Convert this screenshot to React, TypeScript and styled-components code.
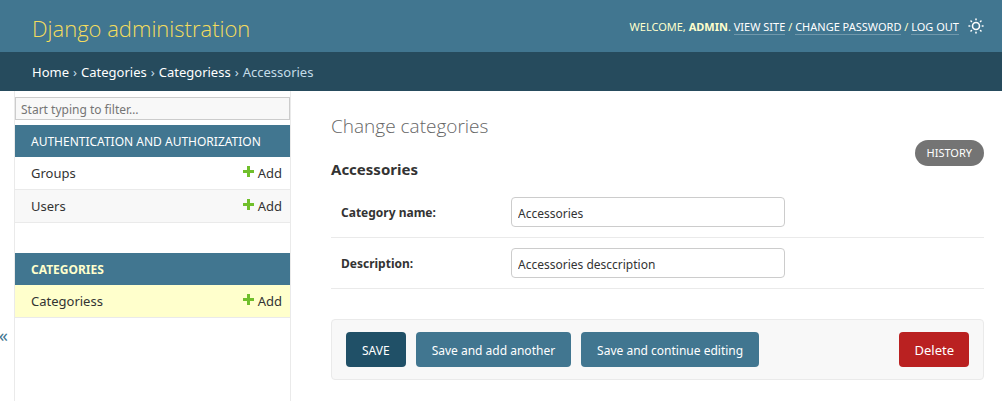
import React from "react";
import styled, { createGlobalStyle } from "styled-components";

const GlobalStyle = createGlobalStyle`
  *, *::before, *::after { box-sizing: border-box; }
  html, body, #root { margin: 0; height: 100%; }
  body {
    background: #fff;
    color: #333;
    font-family: "Segoe UI", "Noto Sans", "Open Sans", sans-serif;
    font-size: 13px;
    line-height: 20px;
  }
  h1, h2, p { margin: 0; }
  a { color: inherit; text-decoration: none; }
  input, button { font-family: inherit; margin: 0; }
`;

const Page = styled.div`
  min-height: 100%;
  display: flex;
  flex-direction: column;
`;

const Header = styled.header`
  display: flex;
  align-items: center;
  justify-content: space-between;
  height: 52px;
  padding: 0 18px 0 32px;
  background: #417690;
  color: #ffc;
`;

const SiteName = styled.a`
  color: #f5dd5d;
  font-family: "Segoe UI", "Open Sans", sans-serif;
  font-size: 22px;
  font-weight: 300;
  line-height: 32px;
  padding-top: 3px;
`;

const UserTools = styled.div`
  display: flex;
  align-items: center;
  gap: 9px;
  font-size: 11px;
  line-height: 15px;
  text-transform: uppercase;
`;

const ToolLink = styled.a`
  color: #fff;
  border-bottom: 1px solid rgba(255, 255, 255, 0.25);
`;

const ThemeToggle = styled.button`
  display: flex;
  padding: 0;
  border: 0;
  background: none;
  color: #fff;
`;

const Breadcrumbs = styled.nav`
  display: flex;
  align-items: center;
  gap: 4px;
  height: 39px;
  padding: 0 32px;
  background: #264b5d;
  color: #c4dce8;

  a { color: #fff; }
`;

const Body = styled.div`
  flex: 1;
  display: flex;
`;

const Toggle = styled.button`
  display: flex;
  align-items: flex-start;
  justify-content: flex-end;
  flex: 0 0 15px;
  min-width: 0;
  padding: 232px 6px 0 0;
  border: 0;
  border-right: 1px solid #eaeaea;
  background: #fff;
  color: #417690;
  font-size: 18px;
  line-height: 24px;
`;

const Sidebar = styled.nav`
  flex: 0 0 276px;
  padding-top: 6px;
  border-right: 1px solid #eaeaea;
`;

const Filter = styled.input`
  display: block;
  width: 100%;
  height: 23px;
  margin-bottom: 5px;
  padding: 2px 5px 0;
  border: 1px solid #ccc;
  background: #f8f8f8;
  font-size: 12px;

  &::placeholder { color: #757575; opacity: 1; }
`;

const ModuleTable = styled.table`
  width: 100%;
  margin-bottom: 30px;
  border-collapse: separate;
  border-spacing: 0;

  caption {
    height: 32px;
    padding: 1px 16px 0;
    background: #417690;
    color: #fff;
    font-size: 12px;
    line-height: 31px;
    text-align: left;
    text-transform: uppercase;
  }
`;

const CaptionLink = styled.a<{ $current?: boolean }>`
  color: ${(p) => (p.$current ? "#ffc" : "#fff")};
  font-weight: ${(p) => (p.$current ? 700 : 400)};
`;

const ModelRow = styled.tr<{ $tone: string }>`
  background: ${(p) => p.$tone};

  th, td {
    height: 33px;
    padding: 0 8px 0 16px;
    border-bottom: 1px solid #eaeaea;
    font-size: 13px;
    line-height: 20px;
    vertical-align: middle;
  }
  th { font-weight: 400; text-align: left; }
  td { text-align: right; }
`;

const AddLink = styled.a`
  display: flex;
  justify-content: flex-end;
  gap: 4px;

  svg { margin-top: 3px; }
`;

const Main = styled.main`
  flex: 1;
  min-width: 0;
  padding: 20px 18px 20px 40px;
`;

const Title = styled.h1`
  color: #666;
  font-family: "Segoe UI", "Open Sans", sans-serif;
  font-size: 19px;
  font-weight: 300;
  line-height: 30px;
`;

const ObjectHead = styled.div`
  display: flex;
  justify-content: space-between;
  align-items: flex-start;
  height: 46px;
`;

const ObjectName = styled.h2`
  padding-top: 18px;
  font-size: 15px;
  font-weight: 700;
  line-height: 20px;
`;

const HistoryLink = styled.a`
  margin-top: -1px;
  padding: 3px 12px;
  border-radius: 15px;
  background: #747474;
  color: #fff;
  font-size: 11px;
  line-height: 20px;
  text-transform: uppercase;
`;

const FormRow = styled.div`
  display: flex;
  align-items: center;
  padding: 10px;
  border-bottom: 1px solid #eaeaea;

  label {
    width: 170px;
    padding-top: 2px;
    font-size: 12px;
    font-weight: 700;
  }
`;

const TextField = styled.input`
  width: 274px;
  height: 30px;
  padding: 2px 6px 0;
  border: 1px solid #ccc;
  border-radius: 4px;
  background: #fff;
  color: #333;
  font-size: 12px;
`;

const SubmitRow = styled.div`
  display: flex;
  gap: 10px;
  margin-top: 30px;
  padding: 12px 14px;
  border: 1px solid #eaeaea;
  border-radius: 4px;
  background: #f8f8f8;
`;

const ActionButton = styled.button<{ $color: string; $upper?: boolean }>`
  height: 35px;
  padding: 2px 16px 0;
  border: 0;
  border-radius: 4px;
  background: ${(p) => p.$color};
  color: #fff;
  font-size: 12px;
  text-transform: ${(p) => (p.$upper ? "uppercase" : "none")};
`;

const DeleteLink = styled.a`
  height: 35px;
  margin-left: auto;
  padding: 1px 15px 0;
  border-radius: 4px;
  background: #ba2121;
  color: #fff;
  font-size: 13px;
  line-height: 34px;
`;

const SunIcon = () => (
  <svg width="16" height="16" viewBox="0 0 16 16" fill="none" stroke="currentColor" strokeLinecap="round" aria-hidden="true">
    <circle cx="8" cy="8" r="3.5" strokeWidth="1.6" />
    <path
      strokeWidth="1.6"
      d="M8 1v.7M8 14.3v.7M1 8h.7M14.3 8h.7M3 3l.5.5M12.5 12.5l.5.5M3 13l.5-.5M12.5 3.5l.5-.5"
    />
  </svg>
);

const PlusIcon = () => (
  <svg width="11" height="11" viewBox="0 0 11 11" fill="#70bf2b" aria-hidden="true">
    <path d="M4 0h3v4h4v3H7v4H4V7H0V4h4z" />
  </svg>
);

type Model = { name: string; tone: string };

const Module = ({ title, models, current }: { title: string; models: Model[]; current?: boolean }) => (
  <ModuleTable>
    <caption>
      <CaptionLink href="#" $current={current}>{title}</CaptionLink>
    </caption>
    <tbody>
      {models.map((m) => (
        <ModelRow key={m.name} $tone={m.tone}>
          <th scope="row"><a href="#">{m.name}</a></th>
          <td><AddLink href="#"><PlusIcon />Add</AddLink></td>
        </ModelRow>
      ))}
    </tbody>
  </ModuleTable>
);

export default function App() {
  return (
    <Page>
      <GlobalStyle />
      <Header>
        <SiteName href="#">Django administration</SiteName>
        <UserTools>
          <span>
            Welcome, <strong>admin</strong>. <ToolLink href="#">View site</ToolLink> /{" "}
            <ToolLink href="#">Change password</ToolLink> / <ToolLink href="#">Log out</ToolLink>
          </span>
          <ThemeToggle type="button" aria-label="Toggle theme"><SunIcon /></ThemeToggle>
        </UserTools>
      </Header>
      <Breadcrumbs aria-label="Breadcrumbs">
        <a href="#">Home</a>
        <span>›</span>
        <a href="#">Categories</a>
        <span>›</span>
        <a href="#">Categoriess</a>
        <span>›</span>
        <span>Accessories</span>
      </Breadcrumbs>
      <Body>
        <Toggle type="button" aria-label="Toggle navigation">«</Toggle>
        <Sidebar>
          <Filter type="search" placeholder="Start typing to filter…" aria-label="Filter navigation items" />
          <Module
            title="Authentication and Authorization"
            models={[{ name: "Groups", tone: "#fff" }, { name: "Users", tone: "#f8f8f8" }]}
          />
          <Module title="Categories" current models={[{ name: "Categoriess", tone: "#ffc" }]} />
        </Sidebar>
        <Main>
          <Title>Change categories</Title>
          <ObjectHead>
            <ObjectName>Accessories</ObjectName>
            <HistoryLink href="#">History</HistoryLink>
          </ObjectHead>
          <form onSubmit={(e) => e.preventDefault()}>
            <FormRow>
              <label htmlFor="name">Category name:</label>
              <TextField id="name" type="text" defaultValue="Accessories" />
            </FormRow>
            <FormRow>
              <label htmlFor="description">Description:</label>
              <TextField id="description" type="text" defaultValue="Accessories desccription" />
            </FormRow>
            <SubmitRow>
              <ActionButton type="submit" $color="#205067" $upper>Save</ActionButton>
              <ActionButton type="submit" $color="#417690">Save and add another</ActionButton>
              <ActionButton type="submit" $color="#417690">Save and continue editing</ActionButton>
              <DeleteLink href="#">Delete</DeleteLink>
            </SubmitRow>
          </form>
        </Main>
      </Body>
    </Page>
  );
}
